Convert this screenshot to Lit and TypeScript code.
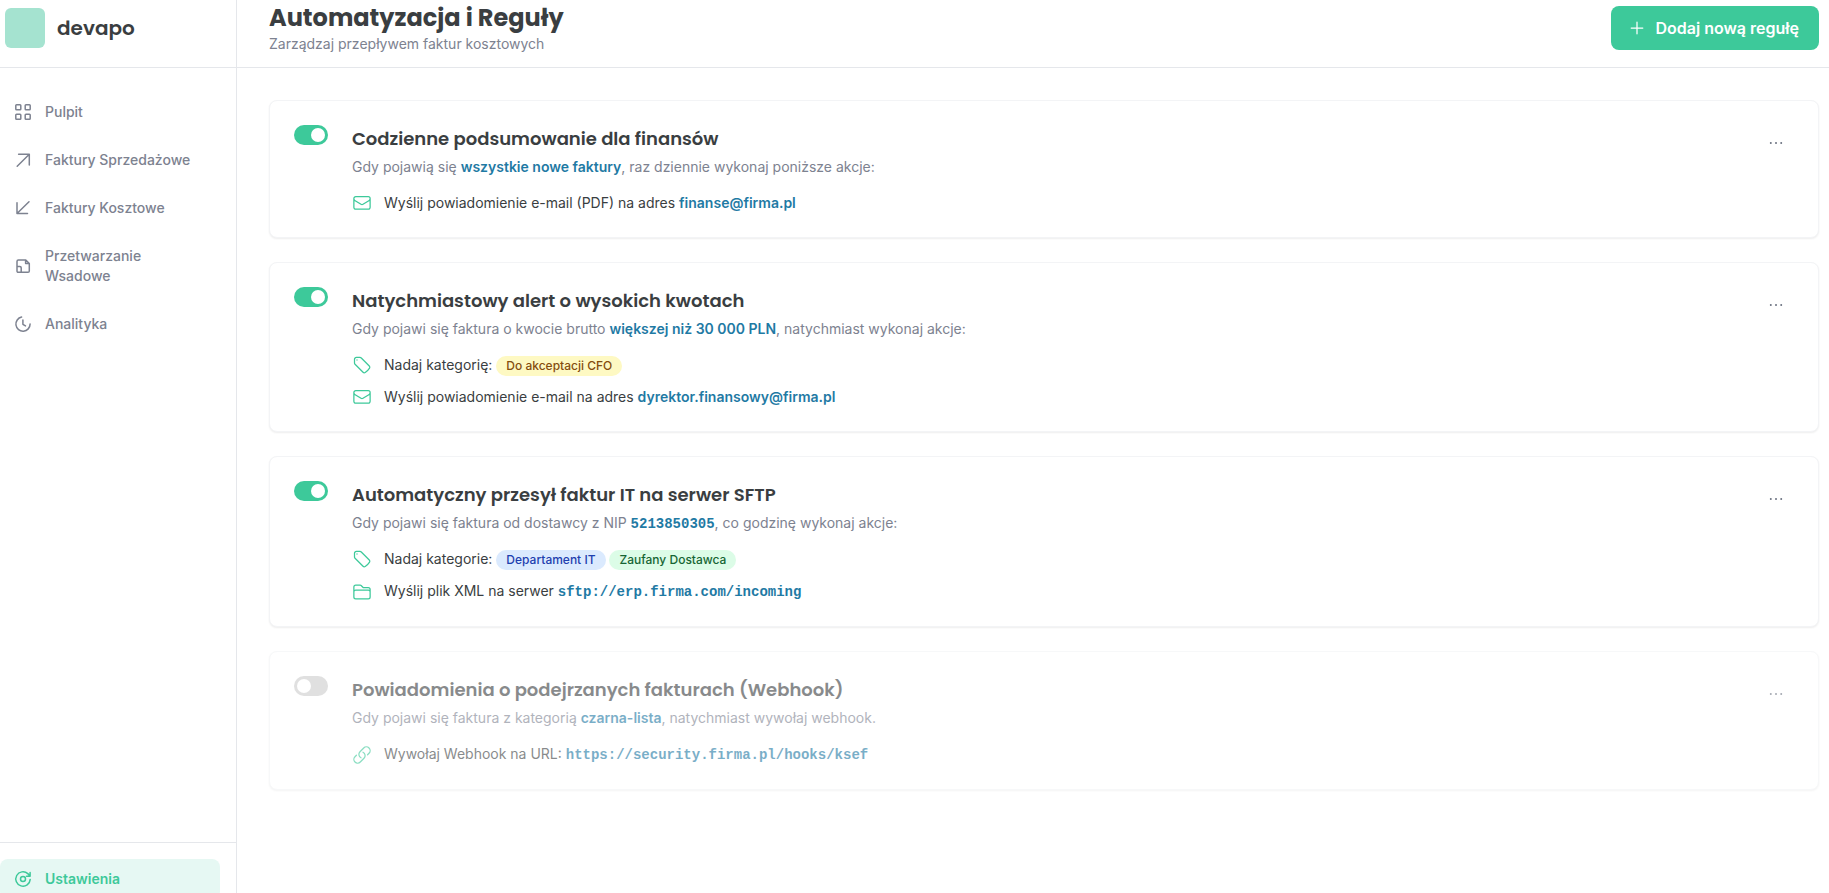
import { LitElement, html, css, svg, type TemplateResult, type SVGTemplateResult } from "lit";
import { customElement, property } from "lit/decorators.js";

// Drawn on a 24 unit grid, shown on the shared 20 unit one.
const from24 = (d: string) => svg`<g transform="scale(.83333)"><path stroke-width="1.5" d=${d} /></g>`;

const paths: Record<string, SVGTemplateResult> = {
  grid: svg`<rect x="2.8" y="2.8" width="5" height="5" rx=".8"/><rect x="12.2" y="2.8" width="5" height="5" rx=".8"/><rect x="2.8" y="12.2" width="5" height="5" rx=".8"/><rect x="12.2" y="12.2" width="5" height="5" rx=".8"/>`,
  upRight: svg`<path d="M4.2 16.3 16.3 4.2M5.6 4.2h10.700v10.7"/>`,
  downLeft: svg`<path d="M16 3.8 4 15.5M4 4.8v10.700h10.500"/>`,
  batch: svg`<path d="M4 10.500V5.400C4 4.500 4.600 4 5.400 4h7.400L16.300 7.500v7.500c0 .8-.6 1.300-1.300 1.300H8.300M12.600 4.200v3.400H16M4 10.500h2.900c.8 0 1.300.5 1.300 1.200v4.600H5.200c-.7 0-1.200-.5-1.200-1.200z"/>`,
  clock: svg`<path d="M8.600 3.100A7.100 7.100 0 1 0 17.100 10M9.900 5.900v4.400l2.600 1.600"/>`,
  settings: svg`<path d="M17.200 10.400A7.200 7.200 0 1 1 14.800 4.600L16.800 6.600M17.100 3.600v3.600h-3.600"/><circle cx="10" cy="10" r="2.500"/>`,
  plus: svg`<path d="M10 4.200v11.600M4.200 10h11.600"/>`,
  mail: from24("M21.75 6.75v10.5a2.25 2.25 0 0 1-2.25 2.25h-15a2.25 2.25 0 0 1-2.25-2.25V6.75m19.5 0A2.25 2.25 0 0 0 19.5 4.500h-15a2.25 2.25 0 0 0-2.25 2.25m19.5 0v.243a2.25 2.25 0 0 1-1.070 1.916l-7.500 4.615a2.25 2.25 0 0 1-2.360 0L3.320 8.910a2.25 2.25 0 0 1-1.070-1.916V6.750"),
  tag: from24("M9.568 3H5.25A2.25 2.25 0 0 0 3 5.25v4.318c0 .597.237 1.170.659 1.591l9.581 9.581c.699.699 1.780.872 2.607.330a18.095 18.095 0 0 0 5.223-5.223c.542-.827.369-1.908-.330-2.607L11.160 3.660A2.25 2.25 0 0 0 9.568 3ZM6 6h.008v.008H6V6Z"),
  folder: from24("M2.25 12.75V12A2.25 2.25 0 0 1 4.500 9.750h15A2.25 2.25 0 0 1 21.750 12v.750m-8.690-6.440l-2.120-2.120a1.500 1.500 0 0 0-1.061-.440H4.500A2.25 2.25 0 0 0 2.250 6v12a2.25 2.25 0 0 0 2.250 2.250h15A2.25 2.25 0 0 0 21.750 18V9a2.25 2.25 0 0 0-2.250-2.250h-5.379a1.500 1.500 0 0 1-1.060-.440Z"),
  link: from24("M13.190 8.688a4.500 4.500 0 0 1 1.242 7.244l-4.500 4.500a4.500 4.500 0 0 1-6.364-6.364l1.757-1.757m13.350-.622l1.757-1.757a4.500 4.500 0 0 0-6.364-6.364l-4.500 4.500a4.500 4.500 0 0 0 1.242 7.244"),
  dots: svg`<path d="M4.800 10h.01M10 10h.01M15.200 10h.01"/>`,
};

const icon = (name: string) =>
  html`<svg class="icon" viewBox="0 0 20 20" aria-hidden="true">${paths[name]}</svg>`;

interface Action { icon: string; text: TemplateResult; }
interface Rule { title: string; on: boolean; when: TemplateResult; actions: Action[]; }

const rules: Rule[] = [
  {
    title: "Codzienne podsumowanie dla finansów",
    on: true,
    when: html`Gdy pojawią się <strong>wszystkie nowe faktury</strong>, raz dziennie wykonaj poniższe akcje:`,
    actions: [{ icon: "mail", text: html`Wyślij powiadomienie e-mail (PDF) na adres <strong>finanse@firma.pl</strong>` }],
  },
  {
    title: "Natychmiastowy alert o wysokich kwotach",
    on: true,
    when: html`Gdy pojawi się faktura o kwocie brutto <strong>większej niż 30 000 PLN</strong>, natychmiast wykonaj akcje:`,
    actions: [
      { icon: "tag", text: html`Nadaj kategorię: <span class="badge yellow">Do akceptacji CFO</span>` },
      { icon: "mail", text: html`Wyślij powiadomienie e-mail na adres <strong>dyrektor.finansowy@firma.pl</strong>` },
    ],
  },
  {
    title: "Automatyczny przesył faktur IT na serwer SFTP",
    on: true,
    when: html`Gdy pojawi się faktura od dostawcy z NIP <strong class="mono">5213850305</strong>, co godzinę wykonaj akcje:`,
    actions: [
      { icon: "tag", text: html`Nadaj kategorie: <span class="badge blue">Departament IT</span> <span class="badge green">Zaufany Dostawca</span>` },
      { icon: "folder", text: html`Wyślij plik XML na serwer <strong class="mono">sftp://erp.firma.com/incoming</strong>` },
    ],
  },
  {
    title: "Powiadomienia o podejrzanych fakturach (Webhook)",
    on: false,
    when: html`Gdy pojawi się faktura z kategorią <strong>czarna-lista</strong>, natychmiast wywołaj webhook.`,
    actions: [{ icon: "link", text: html`Wywołaj Webhook na URL: <strong class="mono">https://security.firma.pl/hooks/ksef</strong>` }],
  },
];

const iconStyles = css`
  * { box-sizing: border-box; }
  .icon { flex: none; width: 20px; height: 20px; fill: none; stroke: currentColor; stroke-width: 1.25; stroke-linecap: round; stroke-linejoin: round; }
`;

@customElement("rule-card")
export class RuleCard extends LitElement {
  @property({ attribute: false }) rule!: Rule;

  static styles = [iconStyles, css`
    :host { display: block; }
    .card { display: flex; align-items: flex-start; gap: 24px; padding: 24px; background: #fff; border: 1px solid #f3f4f6; border-radius: 8px; box-shadow: 0 1px 2px rgba(0, 0, 0, .07); }
    .off { opacity: .6; }
    .switch { appearance: none; flex: none; display: flex; align-items: center; width: 34px; height: 20px; margin: 0; padding: 3px; border-radius: 10px; background: #ccc; cursor: pointer; }
    .switch::before { content: ""; width: 14px; height: 14px; border-radius: 50%; background: #fff; }
    .switch:checked { background: #3dc99a; justify-content: flex-end; }
    .body { flex: 1; min-width: 0; }
    .title { margin: 0 0 4px; font: 600 18px/28px Poppins, "Open Sans", sans-serif; color: #3a3e41; }
    .when { margin: 0; color: #7d8290; }
    strong { font-weight: 600; color: #1f7aa4; }
    .mono { font-family: "Liberation Mono", monospace; }
    .when .mono { line-height: 16px; }
    .actions { display: grid; gap: 12px; margin: 16px 0 0; padding: 0; list-style: none; }
    .action { display: flex; align-items: center; gap: 12px; color: #3a3e41; }
    .action .icon { color: #3dc99a; }
    .badge { display: inline-block; margin: -1px 0; padding: 2px 10px; border-radius: 10px; font-size: 12px; line-height: 16px; font-weight: 500; }
    .yellow { background: #fef9c3; color: #854d0e; }
    .blue { background: #dbeafe; color: #1e40af; }
    .green { background: #dcfce7; color: #166534; }
    .more { display: flex; padding: 8px; border: 0; background: none; color: #6b7280; cursor: pointer; }
    .more .icon { stroke-width: 2; }
  `];

  render() {
    const r = this.rule;
    return html`<article class="card ${r.on ? "" : "off"}">
      <input class="switch" type="checkbox" role="switch" aria-label=${r.title} .checked=${r.on}>
      <div class="body">
        <h2 class="title">${r.title}</h2>
        <p class="when">${r.when}</p>
        <ul class="actions">
          ${r.actions.map((a) => html`<li class="action">${icon(a.icon)}<span>${a.text}</span></li>`)}
        </ul>
      </div>
      <button class="more" type="button" aria-label="Więcej">${icon("dots")}</button>
    </article>`;
  }
}

const nav = [
  ["grid", "Pulpit"],
  ["upRight", "Faktury Sprzedażowe"],
  ["downLeft", "Faktury Kosztowe"],
  ["batch", "Przetwarzanie Wsadowe"],
  ["clock", "Analityka"],
];

@customElement("app-root")
export class AppRoot extends LitElement {
  static styles = [iconStyles, css`
    :host { display: flex; height: 100vh; overflow: hidden; background: #fff; color: #3a3e41; font: 400 14px/20px Inter, sans-serif; }
    .sidebar { flex: none; display: flex; flex-direction: column; width: 237px; border-right: 1px solid #e5e7eb; overflow: hidden; }
    .brand { display: flex; align-items: center; gap: 12px; height: 68px; padding: 0 5px 11px; border-bottom: 1px solid #e5e7eb; font: 600 20px/28px Poppins, "Open Sans", sans-serif; }
    .logo { width: 40px; height: 40px; border-radius: 6px; background: #a5e3d0; }
    .nav { flex: 1; display: flex; flex-direction: column; gap: 8px; padding: 24px 16px 0 0; }
    .item { display: flex; align-items: center; gap: 12px; padding: 10px 12px 10px 13px; border-radius: 8px; color: #7d8290; font-weight: 500; text-decoration: none; }
    .item .icon { stroke-width: 1.5; }
    .active { background: #e6f8f3; color: #3dc99a; font-weight: 600; }
    .foot { margin-bottom: -6px; padding: 16px 16px 0 0; border-top: 1px solid #e5e7eb; }
    .page { flex: 1; min-width: 0; display: flex; flex-direction: column; }
    .header { flex: none; display: flex; align-items: center; justify-content: space-between; height: 68px; padding: 0 10px 11px 32px; border-bottom: 1px solid #e5e7eb; }
    .heading { margin: 0; font: 700 24px/32px Poppins, "Open Sans", sans-serif; }
    .sub { margin: 0; color: #7d8290; }
    .add { display: flex; align-items: center; gap: 8px; height: 44px; padding: 0 20px 0 16px; border: 0; border-radius: 8px; background: #3dc99a; color: #fff; font: 600 16px/24px Inter, sans-serif; cursor: pointer; }
    .rules { flex: 1; display: flex; flex-direction: column; gap: 24px; padding: 32px 10px 0 32px; overflow: hidden; }
  `];

  render() {
    return html`
      <aside class="sidebar">
        <div class="brand"><span class="logo"></span>devapo</div>
        <nav class="nav">
          ${nav.map(([name, label]) => html`<a class="item" href="#">${icon(name)}<span>${label}</span></a>`)}
        </nav>
        <div class="foot"><a class="item active" href="#" aria-current="page">${icon("settings")}<span>Ustawienia</span></a></div>
      </aside>
      <main class="page">
        <header class="header">
          <div>
            <h1 class="heading">Automatyzacja i Reguły</h1>
            <p class="sub">Zarządzaj przepływem faktur kosztowych</p>
          </div>
          <button class="add" type="button">${icon("plus")}Dodaj nową regułę</button>
        </header>
        <section class="rules">${rules.map((r) => html`<rule-card .rule=${r}></rule-card>`)}</section>
      </main>`;
  }
}
